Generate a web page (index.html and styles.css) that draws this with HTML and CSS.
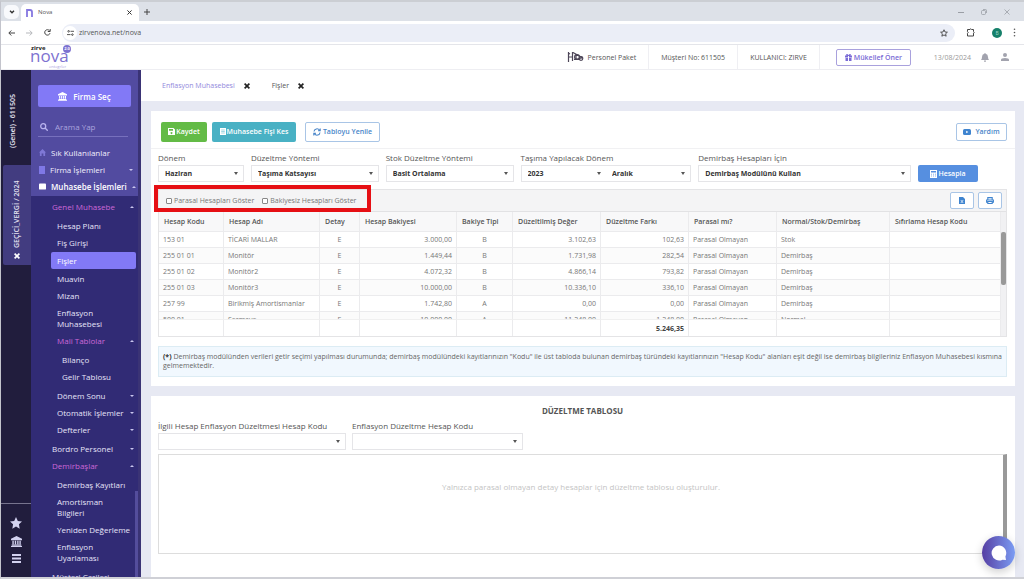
FILE: index.html
```html
<!DOCTYPE html>
<html lang="tr">
<head>
<meta charset="utf-8">
<title>Nova</title>
<link rel="stylesheet" href="styles.css">
</head>
<body>
<svg class="defs" width="0" height="0" aria-hidden="true">
  <symbol id="bank" viewBox="0 0 16 16"><path d="M8 0 0 4v2h16V4zM2 7h2v5H2zm3.500 0h2v5h-2zm3.500 0h2v5H9zm3.200 0h2v5h-2zM1 12.500h14V14H1zM0 14.500h16V16H0z"/></symbol>
  <symbol id="times" viewBox="0 0 10 10"><path d="M2 0 0 2l3 3-3 3 2 2 3-3 3 3 2-2-3-3 3-3-2-2-3 3z"/></symbol>
</svg>
<div class="tabstrip">
  <button class="tab-search" aria-label="Sekme ara"><svg width="6" height="4" viewBox="0 0 6 4" fill="none" stroke="#333" stroke-width="1.300"><path d="M1 .7 3 2.800 5 .7"/></svg></button>
  <div class="browser-tab">
    <svg width="7" height="8" viewBox="0 0 7 8" fill="none" stroke="#8577e0" stroke-width="1.800"><path d="M1 8V1h3q2 0 2 2v5"/></svg>
    <span class="browser-title">Nova</span>
    <button class="plain" aria-label="Kapat"><svg width="5" height="5" viewBox="0 0 6 6" stroke="#333" stroke-width="1.200"><path d="M.5.5l5 5M5.500.5l-5 5"/></svg></button>
  </div>
  <button class="plain new-tab" aria-label="Yeni sekme"><svg width="6" height="6" viewBox="0 0 6 6" stroke="#444" stroke-width="1"><path d="M3 0v6M0 3h6"/></svg></button>
  <div class="window-controls">
    <svg width="6" height="6" viewBox="0 0 6 6" stroke="#9a9ea5"><path d="M0 3.500h6"/></svg>
    <svg width="6" height="6" viewBox="0 0 6 6" fill="none" stroke="#9a9ea5" stroke-width=".8"><rect x=".5" y="1.500" width="4" height="4" rx="1"/><path d="M2 .5h2.500q1 0 1 1V4"/></svg>
    <svg width="6" height="6" viewBox="0 0 6 6" stroke="#9a9ea5" stroke-width=".8"><path d="M.5.5l5 5M5.500.5l-5 5"/></svg>
  </div>
</div>
<div class="toolbar">
  <button class="plain" aria-label="Geri"><svg width="7" height="6" viewBox="0 0 7 6" fill="none" stroke="#444"><path d="M7 3H1M3.300.5.8 3l2.500 2.500"/></svg></button>
  <button class="plain" aria-label="İleri"><svg width="7" height="6" viewBox="0 0 7 6" fill="none" stroke="#b5b7bb"><path d="M0 3h6M3.700.5 6.200 3 3.700 5.500"/></svg></button>
  <button class="plain" aria-label="Yenile"><svg width="7" height="7" viewBox="0 0 7 7" fill="none" stroke="#444"><path d="M6 4.200A2.700 2.700 0 1 1 5.500 1.700M6.200 0v2.500H3.800"/></svg></button>
  <div class="address">
    <span class="site-info"><svg width="7" height="6" viewBox="0 0 7 6" fill="none" stroke="#444" stroke-width=".9"><path d="M3.500 1.300H7M0 4.600h3.500"/><circle cx="1.600" cy="1.300" r=".8"/><circle cx="5.400" cy="4.600" r=".8"/></svg></span>
    <input class="url" value="zirvenova.net/nova" aria-label="Adres">
    <svg width="8" height="8" viewBox="0 0 16 16" fill="none" stroke="#444" stroke-width="1.800"><path d="m8 1.500 2 4.500 4.800.4-3.600 3.200 1.100 4.800L8 11.900l-4.300 2.500 1.100-4.800L1.200 6.400 6 6z"/></svg>
  </div>
  <svg class="ext" width="9" height="9" viewBox="0 0 9 9" fill="none" stroke="#444"><path d="M1.500 1.500H4q.8-1.500 1.600 0H7.500v2q1.400.8 0 1.600v2.900h-6V5.300q1.400-.8 0-1.600z"/></svg>
  <span class="profile">B</span>
  <svg width="3" height="9" viewBox="0 0 3 9" fill="#555"><circle cx="1.500" cy="1.300" r=".8"/><circle cx="1.500" cy="4.500" r=".8"/><circle cx="1.500" cy="7.700" r=".8"/></svg>
</div>

<header class="header">
  <div class="logo">
    <span class="logo-top">zirve</span>
    <span class="logo-main">nova</span>
    <span class="logo-badge">2.0</span>
    <span class="logo-sub">entegrler</span>
  </div>
  <div class="header-info">
    <div class="info package">
      <svg width="17" height="12" viewBox="0 0 17 12" fill="none" stroke="#4d4658" stroke-width="1.200"><path d="M1.500 1v10M1 6h5M5.500 1v9M1 2l2 1M6 1.500 16 7M7 8.500l8-1.500M9 3v6M12.500 5v4"/><circle cx="10" cy="6" r="2.400"/><circle cx="14" cy="7.500" r="1.800"/></svg>
      <span>Personel Paket</span>
    </div>
    <div class="info">Müşteri No: 611505</div>
    <div class="info">KULLANICI: ZIRVE</div>
    <button class="btn refer"><svg width="7" height="7" viewBox="0 0 14 14" fill="#7a6bd6"><path d="M0 3h3Q1 0 3.500 0 6 0 7 2.600 8 0 10.500 0 13 0 11 3h3v4H8V4H6v3H0zM1 8h5v6H1zm7 0h5v6H8z"/></svg>Mükellef Öner</button>
    <span class="date">13/08/2024</span>
    <svg class="bell" width="8" height="9" viewBox="0 0 8 9" fill="#a2a3ae"><path d="M4 0q.6 0 .6.7Q7 1.200 7 4q0 2 1 3H0q1-1 1-3 0-2.800 2.400-3.300Q3.400 0 4 0zM3 7.500h2Q5 9 4 9T3 7.500z"/></svg>
    <svg width="8" height="8" viewBox="0 0 8 8" fill="#a2a3ae"><circle cx="4" cy="2" r="2"/><path d="M0 8V6.800Q0 5 4 5t4 1.800V8z"/></svg>
  </div>
</header>

<div class="app">
  <aside class="rail">
    <div class="rail-tab company">(Genel) - 611505</div>
    <div class="rail-tab period"><svg width="6" height="6" fill="#fff"><use href="#times"/></svg><span>GEÇİCİ_VERGİ / 2024</span></div>
    <div class="rail-icons">
      <svg width="12" height="12" viewBox="0 0 16 16"><path d="m8 0 2.400 5.200 5.600.7-4.100 3.900 1 5.700L8 12.700l-4.900 2.800 1-5.700L0 5.900l5.600-.7z"/></svg>
      <svg width="11" height="11"><use href="#bank"/></svg>
      <svg width="9" height="9" viewBox="0 0 9 9"><path d="M0 0h9v2H0zm0 3.500h9v2H0zM0 7h9v2H0z"/></svg>
    </div>
  </aside>
  <nav class="menu">
    <div class="menu-top">
      <button class="btn choose"><svg width="9" height="9" fill="#fff"><use href="#bank"/></svg>Firma Seç</button>
      <label class="search"><svg width="8" height="8" viewBox="0 0 8 8" fill="none" stroke="#b9b3ee" stroke-width="1.300"><circle cx="3.200" cy="3.200" r="2.500"/><path d="m5 5 2.700 2.700"/></svg><input placeholder="Arama Yap" aria-label="Arama Yap"></label>
      <a class="main-item" href="#"><svg width="7" height="7" viewBox="0 0 8 8" fill="#7f78d6"><path d="M4 0 0 4h1v4h2V5h2v3h2V4h1z"/></svg>Sık Kullanılanlar</a>
      <a class="main-item" href="#"><svg width="6" height="8" viewBox="0 0 6 8" fill="#7f78e6"><path d="M0 0h6v8H0z"/></svg>Firma İşlemleri<i class="arrow"></i></a>
      <a class="main-item strong" href="#"><svg width="7" height="7" viewBox="0 0 8 7" fill="#fff"><rect width="8" height="7" rx="1"/></svg>Muhasebe İşlemleri<i class="arrow up"></i></a>
    </div>
    <div class="menu-body">
      <a class="item pink" href="#">Genel Muhasebe<i class="arrow up"></i></a>
      <div class="sub">
        <a class="item" href="#">Hesap Planı</a>
        <a class="item" href="#">Fiş Girişi</a>
        <a class="item active" href="#">Fişler</a>
        <a class="item" href="#">Muavin</a>
        <a class="item" href="#">Mizan</a>
        <a class="item" href="#">Enflasyon<br>Muhasebesi</a>
        <a class="item pink" href="#">Mali Tablolar<i class="arrow up"></i></a>
        <div class="sub">
          <a class="item" href="#">Bilanço</a>
          <a class="item" href="#">Gelir Tablosu</a>
        </div>
        <a class="item" href="#">Dönem Sonu<i class="arrow"></i></a>
        <a class="item" href="#">Otomatik İşlemler<i class="arrow"></i></a>
        <a class="item" href="#">Defterler<i class="arrow"></i></a>
      </div>
      <a class="item" href="#">Bordro Personel<i class="arrow"></i></a>
      <a class="item pink" href="#">Demirbaşlar<i class="arrow up"></i></a>
      <div class="sub">
        <a class="item" href="#">Demirbaş Kayıtları</a>
        <a class="item" href="#">Amortisman<br>Bilgileri</a>
        <a class="item" href="#">Yeniden Değerleme</a>
        <a class="item" href="#">Enflasyon<br>Uyarlaması</a>
      </div>
      <a class="item" href="#">Müşteri Çarileri</a>
    </div>
    <span class="menu-thumb"></span>
  </nav>

  <main class="content">
    <div class="page-tabs">
      <a class="page-tab current" href="#">Enflasyon Muhasebesi</a><button class="plain" aria-label="Kapat"><svg width="6" height="6" fill="#222"><use href="#times"/></svg></button>
      <a class="page-tab" href="#">Fişler</a><button class="plain" aria-label="Kapat"><svg width="6" height="6" fill="#222"><use href="#times"/></svg></button>
    </div>

    <section class="card">
      <div class="actions">
        <button class="btn green"><svg width="7" height="7" viewBox="0 0 7 7" fill="#fff" fill-rule="evenodd"><path d="M0 0h5.500L7 1.500V7H0zM1 1v1.800h4V1zm2.500 3a1 1 0 1 0 .01 0z"/></svg>Kaydet</button>
        <button class="btn teal"><svg width="6" height="7" viewBox="0 0 6 7" fill="#fff"><path d="M0 0h6v7H0z"/><path d="M1.200 2h3.600M1.200 3.500h3.600M1.200 5h3.600" stroke="#49b1c4" stroke-width=".5"/></svg>Muhasebe Fişi Kes</button>
        <button class="btn outline"><svg width="8" height="8" viewBox="0 0 8 8" fill="none" stroke="#4a86c9" stroke-width="1.100"><path d="M1 3.500A3 3 0 0 1 6.500 2.200M7.200.5v2.300H5M7 4.500a3 3 0 0 1-5.500 1.300M.8 7.500V5.200H3"/></svg>Tabloyu Yenile</button>
        <button class="btn outline help"><svg width="8" height="6" viewBox="0 0 8 6" fill="#3f84cf"><rect width="8" height="6" rx="1.500"/><path d="m3.200 1.700 2.200 1.300-2.200 1.300z" fill="#fff"/></svg>Yardım</button>
      </div>

      <form class="filters">
        <div class="field"><label for="f1">Dönem</label><div class="pick"><select id="f1"><option>Haziran</option></select></div></div>
        <div class="field"><label for="f2">Düzeltme Yöntemi</label><div class="pick"><select id="f2"><option>Taşıma Katsayısı</option></select></div></div>
        <div class="field"><label for="f3">Stok Düzeltme Yöntemi</label><div class="pick"><select id="f3"><option>Basit Ortalama</option></select></div></div>
        <div class="field"><label for="f4">Taşıma Yapılacak Dönem</label><div class="pair"><div class="pick"><select id="f4"><option>2023</option></select></div><div class="pick"><select aria-label="Taşıma ayı"><option>Aralık</option></select></div></div></div>
        <div class="field"><label for="f5">Demirbaş Hesapları İçin</label><div class="pick"><select id="f5"><option>Demirbaş Modülünü Kullan</option></select></div></div>
        <button type="button" class="btn blue"><svg width="7" height="8" viewBox="0 0 7 8" fill="#fff"><path fill-rule="evenodd" d="M0 0h7v8H0zM1 1v1.500h5V1z"/><path d="M1 4.200h5M1 6h5" stroke="#568fe0" stroke-width=".7" stroke-dasharray="1 1"/></svg>Hesapla</button>
      </form>

      <div class="grid">
        <div class="grid-bar">
          <label class="check"><input type="checkbox">Parasal Hesapları Göster</label>
          <label class="check"><input type="checkbox">Bakiyesiz Hesapları Göster</label>
          <span class="highlight"></span>
          <div class="grid-tools">
            <button class="btn outline tool" aria-label="Dışa aktar"><svg width="6" height="7" viewBox="0 0 6 7" fill="#3f84cf"><path d="M0 0h4l2 2v5H0z"/><path d="m1.800 3 2.400 3M4.200 3 1.800 6" stroke="#fff" stroke-width=".7"/></svg></button>
            <button class="btn outline tool" aria-label="Yazdır"><svg width="8" height="7" viewBox="0 0 8 7" fill="none" stroke="#3f84cf" stroke-width="1.100"><path d="M1.800 3V.6h4.400V3M1.800 5.200H.6V3h6.800v2.200H6.200M1.800 4.500h4.400v2H1.800z"/></svg></button>
          </div>
        </div>
        <div class="grid-view">
          <table>
            <colgroup><col class="c-code"><col class="c-name"><col class="c-det"><col class="c-bal"><col class="c-type"><col class="c-val"><col class="c-val"><col class="c-val"><col class="c-kind"><col class="c-reset"></colgroup>
            <thead><tr><th>Hesap Kodu</th><th>Hesap Adı</th><th>Detay</th><th>Hesap Bakiyesi</th><th>Bakiye Tipi</th><th>Düzeltilmiş Değer</th><th>Düzeltme Farkı</th><th>Parasal mı?</th><th>Normal/Stok/Demirbaş</th><th>Sıfırlama Hesap Kodu</th></tr></thead>
            <tbody>
              <tr><td>153 01</td><td>TİCARİ MALLAR</td><td class="mid">E</td><td class="num">3.000,00</td><td class="mid">B</td><td class="num">3.102,63</td><td class="num">102,63</td><td>Parasal Olmayan</td><td>Stok</td><td></td></tr>
              <tr><td>255 01 01</td><td>Monitör</td><td class="mid">E</td><td class="num">1.449,44</td><td class="mid">B</td><td class="num">1.731,98</td><td class="num">282,54</td><td>Parasal Olmayan</td><td>Demirbaş</td><td></td></tr>
              <tr><td>255 01 02</td><td>Monitör2</td><td class="mid">E</td><td class="num">4.072,32</td><td class="mid">B</td><td class="num">4.866,14</td><td class="num">793,82</td><td>Parasal Olmayan</td><td>Demirbaş</td><td></td></tr>
              <tr><td>255 01 03</td><td>Monitör3</td><td class="mid">E</td><td class="num">10.000,00</td><td class="mid">B</td><td class="num">10.336,10</td><td class="num">336,10</td><td>Parasal Olmayan</td><td>Demirbaş</td><td></td></tr>
              <tr><td>257 99</td><td>Birikmiş Amortismanlar</td><td class="mid">E</td><td class="num">1.742,80</td><td class="mid">A</td><td class="num">0,00</td><td class="num">0,00</td><td>Parasal Olmayan</td><td>Demirbaş</td><td></td></tr>
              <tr><td>500 01</td><td>Sermaye</td><td class="mid">E</td><td class="num">10.000,00</td><td class="mid">A</td><td class="num">11.248,00</td><td class="num">1.248,00</td><td>Parasal Olmayan</td><td>Normal</td><td></td></tr>
            </tbody>
            <tfoot><tr><td></td><td></td><td></td><td></td><td></td><td></td><td class="num">5.246,35</td><td></td><td></td><td></td></tr></tfoot>
          </table>
          <div class="grid-scroll"><span></span></div>
        </div>
      </div>

      <p class="note"><b>(*)</b> Demirbaş modülünden verileri getir seçimi yapılması durumunda; demirbaş modülündeki kayıtlarınızın "Kodu" ile üst tabloda bulunan demirbaş türündeki kayıtlarınızın "Hesap Kodu" alanları eşit değil ise demirbaş bilgileriniz Enflasyon Muhasebesi kısmına gelmemektedir.</p>
    </section>

    <section class="card correction">
      <h2>DÜZELTME TABLOSU</h2>
      <form class="accounts">
        <div class="field"><label for="a1">İlgili Hesap Enflasyon Düzeltmesi Hesap Kodu</label><div class="pick"><select id="a1"><option></option></select></div></div>
        <div class="field"><label for="a2">Enflasyon Düzeltme Hesap Kodu</label><div class="pick"><select id="a2"><option></option></select></div></div>
      </form>
      <div class="empty">Yalnızca parasal olmayan detay hesaplar için düzeltme tablosu oluşturulur.</div>
    </section>
  </main>
</div>
<button class="chat" aria-label="Sohbet"><svg width="16" height="16" viewBox="0 0 16 16" fill="#fff"><path d="M8 .5a7.500 7.500 0 1 0 3.500 14.200L15 15l-.6-3.500A7.500 7.500 0 0 0 8 .5z"/></svg></button>
</body>
</html>
```
FILE: styles.css
```css
* { box-sizing: border-box; }
body {
  margin: 0; height: 100vh; overflow: hidden;
  display: flex; flex-direction: column;
  font: 7px/11px "Open Sans", "Noto Sans", sans-serif; color: #555;
  background: #fff; border-top: 2px solid #cbced3; border-left: 1px solid #c3c4cc; border-bottom: 2px solid #cfd0d6;
}
a { color: inherit; text-decoration: none; }
svg { flex: none; display: block; }
button, input, select { font: inherit; color: inherit; }
.defs { position: absolute; }
.plain { border: 0; background: none; padding: 0; }
.btn {
  display: flex; align-items: center; justify-content: center; gap: 1px;
  border: 0; border-radius: 2px; padding: 0; height: 20px; font-weight: 600; font-size: 7px; white-space: nowrap;
}

/* browser frame */
.tabstrip { flex: none; height: 19px; background: #dde1e8; display: flex; align-items: center; padding: 0 14px 0 3px; }
.tab-search { width: 15px; height: 14px; border: 0; border-radius: 5px; background: #f8f9fc; padding: 0; display: grid; place-items: center; }
.browser-tab { align-self: stretch; margin-top: 2px; width: 118px; background: #fff; border-radius: 5px 5px 0 0; margin-left: 2px; padding: 0 7px 0 5px; display: flex; align-items: center; gap: 5px; }
.browser-title { flex: 1; font-size: 6px; }
.new-tab { margin-left: 5px; }
.window-controls { margin-left: auto; display: flex; gap: 17px; }
.toolbar { flex: none; height: 24px; display: flex; align-items: center; gap: 11px; padding: 0 8px 0 7px; border-bottom: 1px solid #e4e5ea; }
.address { flex: 1; height: 18px; border-radius: 9px; background: #ebeef7; display: flex; align-items: center; gap: 2px; padding: 0 7px 0 1px; }
.site-info { width: 14px; height: 14px; border-radius: 7px; background: #fff; display: grid; place-items: center; }
.url { flex: 1; border: 0; background: none; padding: 0; outline: 0; }
.profile { width: 10px; height: 10px; border-radius: 5px; background: #16806a; color: #9fd6c8; font-size: 5px; line-height: 10px; text-align: center; margin-left: 6px; }

/* application header */
.header { flex: none; height: 25px; display: flex; justify-content: space-between; border-bottom: 1px solid #eeeef2; }
.logo { position: relative; width: 44px; margin-left: 29px; color: #7d72d0; }
.logo-top { position: absolute; left: 1px; top: 0; font: 700 6px/6px "Open Sans", sans-serif; color: #222; }
.logo-main { position: absolute; left: 0; top: 5px; font: 500 17px/12px "Open Sans", sans-serif; }
.logo-badge { position: absolute; left: 33px; top: 0; width: 8px; height: 8px; border-radius: 4px; background: #7d72d0; color: #fff; font: 700 4px/8px "Open Sans", sans-serif; text-align: center; }
.logo-sub { position: absolute; left: 19px; top: 19px; font: 4px/5px "Open Sans", sans-serif; color: #a9a2e0; }
.header-info { display: flex; align-items: center; padding-right: 15px; }
.info { height: 24px; padding: 0 12px; border-right: 1px solid #efeff3; display: flex; align-items: center; gap: 4px; }
.refer { width: 75px; height: 17px; border: 1px solid #a9a1dd; background: #fff; color: #7a6bd6; gap: 2px; margin: 0 23px 0 16px; }
.date { color: #999; }
.bell { margin: 0 12px 0 10px; }

/* left rail and menu */
.app { flex: 1; min-height: 0; display: flex; }
.rail { flex: none; width: 30px; background: #211d3d; color: #e6e4f2; display: flex; flex-direction: column; font-weight: 600; }
.rail-tab { writing-mode: vertical-rl; transform: rotate(180deg); white-space: nowrap; line-height: 24px; }
.company { height: 95px; padding-top: 17px; }
.period { height: 100px; width: 28px; background: #423c80; display: flex; align-items: center; gap: 5px; padding-top: 6px; border-radius: 0 2px 2px 0; align-self: flex-end; }
.rail-icons { margin-top: auto; height: 74px; border-top: 1px solid #77748e; fill: #d3d2f0; padding-top: 13px; display: flex; flex-direction: column; align-items: center; gap: 7px; }
.menu { position: relative; flex: none; width: 110px; overflow: hidden; background: #312b75; border-right: 3px solid #3a3375; color: #e6e4f8; font-size: 8px; font-weight: 500; line-height: 11px; }
.menu-top { background: #524ba0; padding: 15px 3px 0 7px; height: 126px; }
.choose { width: 93px; height: 22px; background: #8279f6; color: #fff; gap: 6px; font-size: 8px; }
.search { display: flex; align-items: center; gap: 7px; height: 20px; width: 90px; margin: 10px 0 7px; padding-left: 2px; border-bottom: 1px solid #7770bd; }
.search input { min-width: 0; border: 0; background: none; padding: 0; outline: 0; font-weight: 400; }
.search input::placeholder { color: #aaa4de; }
.main-item { display: flex; align-items: center; gap: 5px; height: 17px; padding: 0 2px 0 1px; color: #f1effd; white-space: nowrap; }
.strong { color: #fff; font-weight: 600; }
.arrow { margin-left: auto; border: 2px solid transparent; border-top: 2px solid #c9c6ee; border-bottom: 0; }
.arrow.up { border-top: 0; border-bottom: 2px solid #c9c6ee; }
.menu-body { padding: 2px 2px 0 15px; white-space: nowrap; }
.item { display: flex; align-items: center; padding: 3px 2px 3px 6px; border-radius: 2px; }
.sub { padding: 2px 0; }
.sub > .item { padding-left: 11px; }
.sub > .sub > .item { padding-left: 16px; }
.sub > .active { margin: 1px 0 1px 5px; padding-left: 6px; background: #8279f6; color: #fff; }
.menu .pink { color: #cc68d8; }
.menu-thumb { position: absolute; right: 0; bottom: 0; width: 3px; height: 86px; background: #544d9c; }

/* content */
.content { flex: 1; min-width: 0; background: #e7e9f3; display: flex; flex-direction: column; }
.page-tabs { flex: none; height: 31px; background: #fff; display: flex; align-items: center; padding-left: 21px; gap: 9px; }
.page-tab + button { margin-right: 13px; }
.current { color: #9188dc; }
.card { flex: none; margin: 10px 9px 0 10px; background: #fff; padding: 0 8px 9px 7px; }
.actions { display: flex; align-items: center; gap: 5px; height: 37px; padding: 4px 0 0 3px; }
.green { width: 46px; background: #63bb46; color: #fff; }
.teal { width: 84px; background: #49b1c4; color: #fff; }
.outline { border: 1px solid #a9c5e6; background: #fff; color: #4a86c9; width: 75px; margin-left: 4px; gap: 2px; }
.help { width: 51px; height: 18px; margin-left: auto; gap: 4px; }
.filters { display: grid; grid-template-columns: 86fr 128fr 128fr 171fr 213fr 60px; gap: 7px; align-items: end; margin: 0 -8px 0 -7px; padding: 3px 37px 7px 7px; border-top: 1px solid #f1f1f3; }
.field { min-width: 0; }
.field label { display: block; font-size: 8px; font-weight: 500; height: 13px; line-height: 12px; color: #555; white-space: nowrap; }
.pick { position: relative; border: 1px solid #e5e5e8; height: 17px; flex: 1; }
.pick::after { content: ""; position: absolute; right: 5px; top: 6px; border: 2px solid transparent; border-top: 3px solid #555; border-bottom: 0; pointer-events: none; }
.pick select { display: block; width: 100%; height: 100%; border: 0; background: none; appearance: none; padding: 0 6px; font-weight: 700; color: #333; outline: 0; }
.pair { display: flex; border: 1px solid #e5e5e8; height: 17px; }
.pair .pick { border: 0; height: 15px; }
.blue { height: 17px; background: #568fe0; color: #fff; }
.grid { border: 1px solid #e4e4e6; }
.grid-bar { position: relative; height: 22px; background: #f4f4f5; border-bottom: 1px solid #e2e2e4; display: flex; align-items: center; gap: 8px; padding: 0 4px 0 7px; color: #777; }
.check { display: flex; align-items: center; gap: 2px; }
.check input { appearance: none; width: 6px; height: 6px; margin: 0; border: 1px solid #888; border-radius: 1px; background: #fff; }
.highlight { position: absolute; left: -5px; top: -5px; width: 217px; height: 27px; border: 4px solid #e60f14; z-index: 3; }
.grid-tools { margin-left: auto; display: flex; gap: 4px; }
.tool { width: 24px; height: 17px; margin: 0; }
.grid-view { display: flex; height: 124px; overflow: hidden; }
table { flex: 1; min-width: 0; table-layout: fixed; border-collapse: separate; border-spacing: 0; }
.c-code { width: 65px; } .c-name { width: 96px; } .c-det { width: 40px; } .c-bal { width: 97px; } .c-type { width: 56px; }
.c-val { width: 88px; } .c-kind { width: 113px; } .c-reset { width: 111px; }
th, td { padding: 0 4px; white-space: nowrap; text-align: left; border-right: 1px solid #ebebed; border-bottom: 1px solid #ebebed; overflow: hidden; }
th { position: sticky; top: 0; z-index: 1; height: 20px; padding: 0 5px; background: #f8f8f9; font-weight: 600; }
td { height: 16px; line-height: 15px; color: #777; }
tbody tr:nth-child(even) { background: #fbfbfb; }
tfoot td { position: sticky; bottom: 0; height: 17px; background: #fff; border-top: 1px solid #f0f0f0; border-bottom: 0; font-weight: 700; color: #444; }
.mid { text-align: center; }
.num { text-align: right; }
.grid-scroll { flex: none; width: 5px; background: #f1f1f3; padding-top: 20px; }
.grid-scroll span { display: block; height: 53px; background: #999; border-radius: 2px; }
.note { margin: 9px 0 0; padding: 5px 4px; height: 31px; line-height: 9px; background: #f1f8fe; border: 1px solid #dcecf4; color: #666; }
.note b { color: #333; }
.correction { flex: 1; min-height: 0; display: flex; flex-direction: column; padding-bottom: 23px; }
h2 { margin: 9px 0 4px; font-size: 8px; line-height: 11px; text-align: center; font-weight: 700; color: #555; }
.accounts { display: grid; grid-template-columns: 188fr 171fr 478fr; gap: 6px; }
.empty { flex: 1; margin-top: 4px; padding-top: 26px; text-align: center; color: #c4c4c4; border: 1px solid #ddd; border-right: 4px solid #999; font-size: 8px; }
.chat { position: absolute; right: 9px; bottom: 10px; width: 33px; height: 33px; padding: 0; border: 0; border-radius: 50%; background: linear-gradient(90deg, #563fa3, #7b9cf3); display: grid; place-items: center; box-shadow: 0 3px 10px #0003; }
```
